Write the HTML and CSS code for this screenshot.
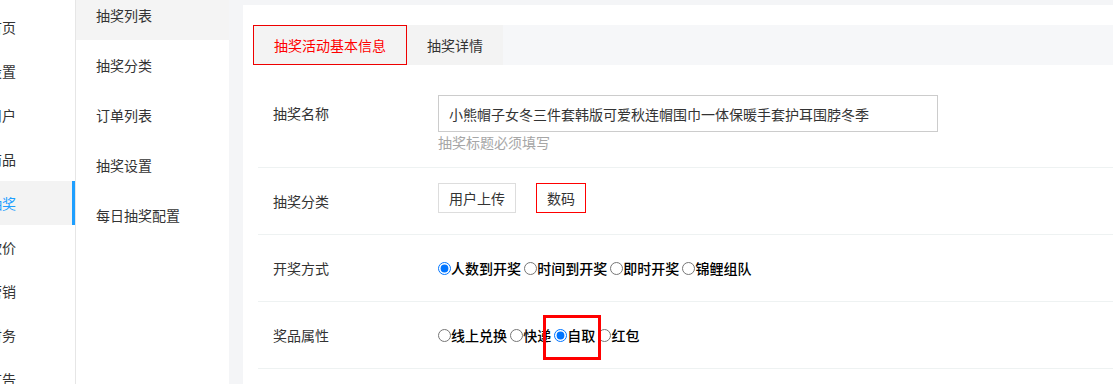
FILE: index.html
```html
<!DOCTYPE html>
<html lang="zh-CN">
<head>
  <meta charset="UTF-8">
  <title>抽奖活动基本信息</title>
  <link rel="stylesheet" href="styles.css">
</head>
<body>

  <div class="nav">
    <div class="nav-item"><span>首页</span></div>
    <div class="nav-item"><span>设置</span></div>
    <div class="nav-item"><span>用户</span></div>
    <div class="nav-item"><span>商品</span></div>
    <div class="nav-item active"><span>抽奖</span></div>
    <div class="nav-item"><span>砍价</span></div>
    <div class="nav-item"><span>营销</span></div>
    <div class="nav-item"><span>财务</span></div>
    <div class="nav-item"><span>广告</span></div>
  </div>

  <div class="subnav">
    <div class="subnav-list">
      <div class="subnav-item active">抽奖列表</div>
      <div class="subnav-item">抽奖分类</div>
      <div class="subnav-item">订单列表</div>
      <div class="subnav-item">抽奖设置</div>
      <div class="subnav-item">每日抽奖配置</div>
    </div>
  </div>

  <div class="main">
    <div class="panel">
      <div class="tabs">
        <div class="tab active">抽奖活动基本信息</div>
        <div class="tab">抽奖详情</div>
      </div>

      <form class="form">
        <div class="row row-name">
          <div class="label">抽奖名称</div>
          <div class="field">
            <input class="text-input" type="text" value="小熊帽子女冬三件套韩版可爱秋连帽围巾一体保暖手套护耳围脖冬季">
            <div class="hint">抽奖标题必须填写</div>
          </div>
        </div>

        <div class="row">
          <div class="label">抽奖分类</div>
          <div class="field cats">
            <span class="cat">用户上传</span>
            <span class="cat selected">数码</span>
          </div>
        </div>

        <div class="row">
          <div class="label">开奖方式</div>
          <div class="field radios">
            <label><input type="radio" name="open" checked>人数到开奖</label>
            <label><input type="radio" name="open">时间到开奖</label>
            <label><input type="radio" name="open">即时开奖</label>
            <label><input type="radio" name="open">锦鲤组队</label>
          </div>
        </div>

        <div class="row">
          <div class="label">奖品属性</div>
          <div class="field radios">
            <label><input type="radio" name="prize">线上兑换</label>
            <label><input type="radio" name="prize">快递</label>
            <label><input type="radio" name="prize" checked>自取</label>
            <label><input type="radio" name="prize">红包</label>
          </div>
          <div class="mark"></div>
        </div>
      </form>
    </div>
  </div>

</body>
</html>
```

FILE: styles.css
```css
* {
  margin: 0;
  padding: 0;
  box-sizing: border-box;
}

body {
  font-family: "Noto Sans CJK SC", "Noto Sans", sans-serif;
  font-size: 14px;
  color: #333;
  display: flex;
  height: 384px;
  overflow: hidden;
  background: #fff;
}

/* main nav, scrolled so only the tail of it shows */
.nav {
  width: 76px;
  flex-shrink: 0;
  border-right: 1px solid #e6e6e6;
  padding-top: 5px;
  overflow: hidden;
}

.nav-item {
  height: 44px;
  line-height: 44px;
  white-space: nowrap;
}

.nav-item span {
  display: inline-block;
  margin-left: -12px;
}

.nav-item.active {
  background: #f3f3f3;
  border-right: 3px solid #1e9fff;
  color: #1e9fff;
}

.subnav {
  width: 153px;
  flex-shrink: 0;
  background: #fff;
  overflow: hidden;
}

.subnav-list {
  margin-top: -10px;
}

.subnav-item {
  height: 50px;
  line-height: 50px;
  padding-left: 20px;
}

.subnav-item.active {
  background: #f4f4f4;
}

.main {
  flex: 1;
  background: #f4f5f7;
  padding: 5px 0 0 14px;
  display: flex;
  min-width: 0;
}

.panel {
  flex: 1;
  background: #fff;
  padding: 20px 0 0 10px;
}

.tabs {
  display: flex;
  height: 40px;
  background: #f6f7f9;
}

.tab {
  padding: 0 20px;
  line-height: 40px;
  background: #f3f3f3;
}

.tab.active {
  border: 1px solid #e00;
  line-height: 38px;
  color: #f00;
}

.form {
  margin-left: 5px;
}

.row {
  position: relative;
  display: flex;
  align-items: center;
  height: 67px;
  border-bottom: 1px solid #eef2f2;
}

.label {
  width: 180px;
  padding-left: 15px;
  flex-shrink: 0;
}

.row-name {
  height: 103px;
  align-items: flex-start;
  padding-top: 30px;
}

.row-name .label {
  line-height: 37px;
}

.text-input {
  display: block;
  width: 500px;
  height: 37px;
  border: 1px solid #ccc;
  padding: 0 10px;
  font: inherit;
  color: #333;
  outline: none;
}

.hint {
  line-height: 20px;
  color: #a6a6a6;
}

.cats {
  display: flex;
  gap: 20px;
  align-self: flex-start;
  margin-top: 15px;
}

.cat {
  height: 30px;
  line-height: 28px;
  padding: 0 10px;
  border: 1px solid #ddd;
}

.cat.selected {
  border-color: #f00;
}

.radios {
  color: #000;
  font-weight: 500;
}

.radios label {
  cursor: pointer;
}

.radios input {
  margin: 0;
  width: 13px;
  height: 13px;
  vertical-align: -1px;
}

/* red highlight drawn over the chosen option */
.mark {
  position: absolute;
  left: 285px;
  top: 13px;
  width: 58px;
  height: 45px;
  border: 3px solid #f00;
  pointer-events: none;
}
```
